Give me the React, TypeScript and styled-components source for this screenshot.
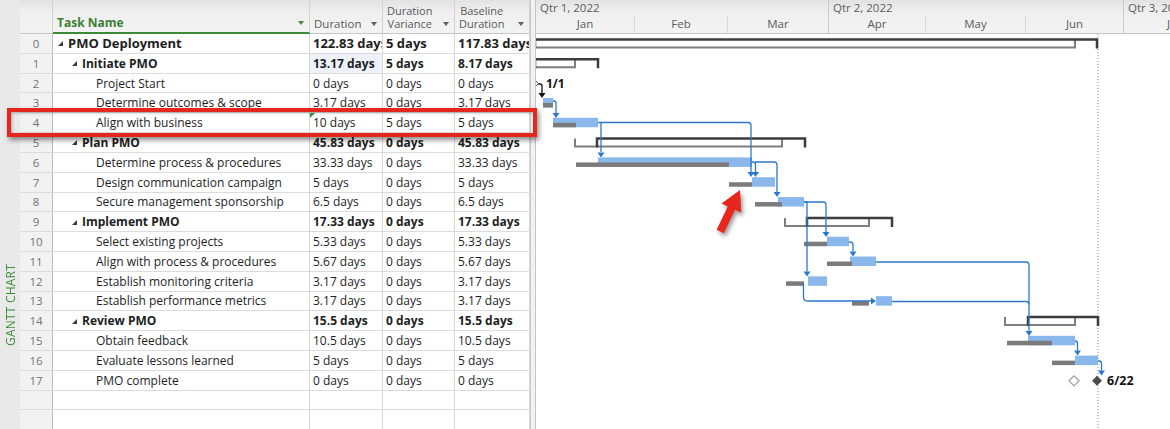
import React from 'react';
import styled, { createGlobalStyle } from 'styled-components';

const GlobalStyle = createGlobalStyle`
	html, body { margin: 0; padding: 0; background: #fff; }
	body { font-family: 'Open Sans', 'Noto Sans', sans-serif; color: #222; }
	* { box-sizing: border-box; }
`;

const COLS = '33px 257px 73px 72px 75px';
const ROW_H = 19.82;
const HEAD_H = 34;

const Screen = styled.div`
	position: relative;
	display: flex;
	width: 1170px;
	height: 429px;
	overflow: hidden;
	background: #fff;
`;

const SideTab = styled.aside`
	flex: 0 0 20px;
	display: flex;
	flex-direction: column;
	justify-content: flex-end;
	align-items: center;
	padding-bottom: 83px;
	background: #e9e9e9;
`;

const SideLabel = styled.span`
	writing-mode: vertical-rl;
	transform: rotate(180deg);
	font-size: 12px;
	letter-spacing: 0.2px;
	color: #3b8c39;
	white-space: nowrap;
`;

const Sheet = styled.section`
	flex: 0 0 510px;
	display: flex;
	flex-direction: column;
`;

const HeadRow = styled.div`
	display: grid;
	grid-template-columns: ${COLS};
	height: ${HEAD_H}px;
	flex: none;
	background: linear-gradient(#e2e2e2, #efefef 35%, #f3f3f3);
`;

const HeadCell = styled.div<{ $accent?: boolean }>`
	display: flex;
	align-items: flex-end;
	justify-content: space-between;
	padding: 0 5px 2px 4px;
	border-right: 1px solid #d2d2d2;
	border-bottom: ${(p) => (p.$accent ? '2px solid #3f8a3a' : '1px solid #c6c6c6')};
	font-size: 11px;
	line-height: 13px;
	color: ${(p) => (p.$accent ? '#3d7f35' : '#5a5a5a')};
	font-weight: ${(p) => (p.$accent ? 700 : 400)};
`;

const HeadLabel = styled.span<{ $size?: number }>`
	text-align: center;
	white-space: nowrap;
	font-size: ${(p) => p.$size ?? 11.5}px;
	padding-bottom: 1px;
`;

const DropArrow = styled.span<{ $color?: string }>`
	flex: none;
	width: 0;
	height: 0;
	margin-bottom: 5px;
	border-left: 3.5px solid transparent;
	border-right: 3.5px solid transparent;
	border-top: 4px solid ${(p) => p.$color || '#5f5f5f'};
`;

const Row = styled.div`
	display: grid;
	grid-template-columns: ${COLS};
	height: ${ROW_H}px;
	flex: none;
`;

const NumCell = styled.div`
	display: flex;
	align-items: center;
	justify-content: center;
	background: #f2f2f2;
	border-right: 1px solid #bdbdbd;
	border-bottom: 1px solid #dcdcdc;
	font-size: 11.5px;
	color: #737373;
`;

const Cell = styled.div<{ $weight: number; $size: number; $tint?: boolean; $flag?: boolean; $indent?: number }>`
	position: relative;
	display: flex;
	align-items: center;
	padding-left: ${(p) => (p.$indent ?? 3)}px;
	border-right: 1px solid #d6d6d6;
	border-bottom: 1px solid #dcdcdc;
	font-size: ${(p) => p.$size}px;
	font-weight: ${(p) => p.$weight};
	color: #1e1e1e;
	white-space: nowrap;
	overflow: hidden;
	background: ${(p) => (p.$tint ? '#edf1f9' : '#fff')};
	&::before {
		content: '';
		display: ${(p) => (p.$flag ? 'block' : 'none')};
		position: absolute;
		left: 0;
		top: 0;
		border-top: 5px solid #2f9a3a;
		border-right: 5px solid transparent;
	}
`;

const Twisty = styled.span`
	flex: none;
	width: 0;
	height: 0;
	margin: 1px 5px 0 0;
	border-left: 5px solid transparent;
	border-bottom: 5px solid #3a3a3a;
`;

const Splitter = styled.div`
	flex: 0 0 6px;
	background: #f1f1f1;
	border-left: 1px solid #c9c9c9;
	border-right: 1px solid #c4c4c4;
`;

const Chart = styled.section`
	flex: 1;
	min-width: 0;
	display: flex;
	flex-direction: column;
`;

const Scale = styled.div`
	flex: none;
	display: flex;
	height: ${HEAD_H}px;
	background: linear-gradient(#e2e2e2, #efefef 35%, #f3f3f3);
	border-bottom: 1px solid #c6c6c6;
`;

const Quarter = styled.div<{ $w: number }>`
	flex: 0 0 ${(p) => p.$w}px;
	display: flex;
	flex-direction: column;
	border-right: 1px solid #cbcbcb;
`;

const QuarterTitle = styled.div`
	height: 16px;
	line-height: 16px;
	padding-left: 4px;
	font-size: 11.5px;
	color: #5c5c5c;
	white-space: nowrap;
`;

const Months = styled.div`
	flex: 1;
	display: flex;
`;

const Month = styled.div<{ $w?: number }>`
	flex: ${(p) => (p.$w ? `0 0 ${p.$w}px` : '1')};
	text-align: center;
	line-height: 16px;
	font-size: 11.5px;
	color: #5c5c5c;
	border-right: 1px solid #d9d9d9;
	&:last-child { border-right: 0; }
`;

const ChartBody = styled.div`
	flex: 1;
	background: #fff;
`;

const Callout = styled.div`
	position: absolute;
	left: 7px;
	top: 108px;
	width: 530px;
	height: 29px;
	border: 4px solid #e4261c;
	box-shadow: 2px 3px 5px rgba(0, 0, 0, 0.45), inset 1px 1px 3px rgba(0, 0, 0, 0.3);
	pointer-events: none;
`;

const Pointer = styled.svg`
	position: absolute;
	left: 700px;
	top: 180px;
	filter: drop-shadow(2px 3px 2px rgba(0, 0, 0, 0.4));
`;

interface Task {
	name: string;
	level: number;
	summary?: boolean;
	duration: string;
	variance: string;
	baseline: string;
}

const tasks: Task[] = [
	{ name: 'PMO Deployment', level: 0, summary: true, duration: '122.83 days', variance: '5 days', baseline: '117.83 days' },
	{ name: 'Initiate PMO', level: 1, summary: true, duration: '13.17 days', variance: '5 days', baseline: '8.17 days' },
	{ name: 'Project Start', level: 2, duration: '0 days', variance: '0 days', baseline: '0 days' },
	{ name: 'Determine outcomes & scope', level: 2, duration: '3.17 days', variance: '0 days', baseline: '3.17 days' },
	{ name: 'Align with business', level: 2, duration: '10 days', variance: '5 days', baseline: '5 days' },
	{ name: 'Plan PMO', level: 1, summary: true, duration: '45.83 days', variance: '0 days', baseline: '45.83 days' },
	{ name: 'Determine process & procedures', level: 2, duration: '33.33 days', variance: '0 days', baseline: '33.33 days' },
	{ name: 'Design communication campaign', level: 2, duration: '5 days', variance: '0 days', baseline: '5 days' },
	{ name: 'Secure management sponsorship', level: 2, duration: '6.5 days', variance: '0 days', baseline: '6.5 days' },
	{ name: 'Implement PMO', level: 1, summary: true, duration: '17.33 days', variance: '0 days', baseline: '17.33 days' },
	{ name: 'Select existing projects', level: 2, duration: '5.33 days', variance: '0 days', baseline: '5.33 days' },
	{ name: 'Align with process & procedures', level: 2, duration: '5.67 days', variance: '0 days', baseline: '5.67 days' },
	{ name: 'Establish monitoring criteria', level: 2, duration: '3.17 days', variance: '0 days', baseline: '3.17 days' },
	{ name: 'Establish performance metrics', level: 2, duration: '3.17 days', variance: '0 days', baseline: '3.17 days' },
	{ name: 'Review PMO', level: 1, summary: true, duration: '15.5 days', variance: '0 days', baseline: '15.5 days' },
	{ name: 'Obtain feedback', level: 2, duration: '10.5 days', variance: '0 days', baseline: '10.5 days' },
	{ name: 'Evaluate lessons learned', level: 2, duration: '5 days', variance: '0 days', baseline: '5 days' },
	{ name: 'PMO complete', level: 2, duration: '0 days', variance: '0 days', baseline: '0 days' },
];

// gantt geometry, in page pixels
type Span = [number, number];
const bars: { row: number; cur: Span; base: Span }[] = [
	{ row: 3, cur: [543, 553], base: [543, 553] },
	{ row: 4, cur: [553, 598], base: [553, 576] },
	{ row: 6, cur: [598, 752], base: [576, 729] },
	{ row: 7, cur: [752, 775], base: [729, 752] },
	{ row: 8, cur: [778, 804], base: [755, 782] },
	{ row: 10, cur: [827, 849], base: [804, 827] },
	{ row: 11, cur: [850, 876], base: [827, 852] },
	{ row: 12, cur: [808, 827], base: [786, 804] },
	{ row: 13, cur: [876, 892], base: [852, 869] },
	{ row: 15, cur: [1028, 1075], base: [1007, 1052] },
	{ row: 16, cur: [1075, 1098], base: [1052, 1075] },
];

const summaries: { row: number; cur: Span; base: Span }[] = [
	{ row: 0, cur: [535, 1097], base: [535, 1075] },
	{ row: 1, cur: [535, 598], base: [535, 575] },
	{ row: 5, cur: [597, 805], base: [575, 782] },
	{ row: 9, cur: [807, 892], base: [785, 869] },
	{ row: 14, cur: [1028, 1098], base: [1005, 1075] },
];

const links: { d: string; tip: [number, number]; dir?: 'right'; color?: string }[] = [
	{ d: 'M538 84 H540 Q542 84 542 86 V93', tip: [542, 98], color: '#111' },
	{ d: 'M553 101 H554 Q556 101 556 103 V113', tip: [556, 118] },
	{ d: 'M598 122.5 H601 V152', tip: [601, 157.5] },
	{ d: 'M601 122.5 H748 Q751 122.5 751 125.5 V172', tip: [751, 177] },
	{ d: 'M752 162 H753 Q755.5 162 755.5 164.5 V172', tip: [755.5, 177] },
	{ d: 'M755 162 H774 Q777 162 777 165 V192', tip: [777, 197] },
	{ d: 'M804 202 H823 Q826 202 826 205 V232', tip: [826, 237] },
	{ d: 'M804 202 H807 V271.5', tip: [807, 276.5] },
	{ d: 'M849 242 H850 Q853 242 853 245 V251.5', tip: [853, 256.5] },
	{ d: 'M803.5 283 V297 Q803.5 301 807.5 301 H871', tip: [876, 301], dir: 'right' },
	{ d: 'M876 262 H1026 Q1029 262 1029 265 V331', tip: [1029, 336] },
	{ d: 'M892 301.5 H1026 Q1029 301.5 1029 304.5', tip: [0, 0] },
	{ d: 'M1075 341 H1075 Q1077.5 341 1077.5 343.5 V350.5', tip: [1077.5, 355.5] },
	{ d: 'M1098 361 H1099 Q1101.5 361 1101.5 363.5 V370.5', tip: [1101.5, 375.5] },
];

const rowTop = (r: number) => HEAD_H + r * ROW_H;
const LINK = '#2c78cf';

function arrowPoints(tip: [number, number], dir?: 'right') {
	const [x, y] = tip;
	if (dir === 'right') return `${x - 5},${y - 3.5} ${x - 5},${y + 3.5} ${x},${y}`;
	return `${x - 3.5},${y - 5} ${x + 3.5},${y - 5} ${x},${y}`;
}

function diamond(cx: number, cy: number, r: number) {
	return `${cx},${cy - r} ${cx + r},${cy} ${cx},${cy + r} ${cx - r},${cy}`;
}

function Gantt() {
	const m17 = rowTop(17) + ROW_H / 2;
	const m2 = rowTop(2) + ROW_H / 2;
	return (
		<svg width={634} height={395} style={{ display: 'block' }}>
			<g transform="translate(-536 -34)">
				<line x1={1098} y1={34} x2={1098} y2={429} stroke="#8d8d8d" strokeDasharray="1 2" />
				{summaries.map((s) => {
					const y1 = rowTop(s.row) + 5.5;
					const y2 = rowTop(s.row) + 13.5;
					return (
						<g key={s.row}>
							<path d={`M${s.base[0]} ${y1} V${y2} H${s.base[1]} V${y1}`} fill="none" stroke="#7e7e7e" strokeWidth={2} />
							<path d={`M${s.cur[0]} ${y2 + 1} V${y1} H${s.cur[1]} V${y2 + 1}`} fill="none" stroke="#3c3c3c" strokeWidth={2.5} />
						</g>
					);
				})}
				{bars.map((b) => (
					<g key={b.row}>
						<rect x={b.cur[0]} y={rowTop(b.row) + 4.5} width={b.cur[1] - b.cur[0]} height={9.5} fill="#8bb8ec" />
						<rect x={b.base[0]} y={rowTop(b.row) + 9.5} width={b.base[1] - b.base[0]} height={4.5} fill="#7b7b7b" />
					</g>
				))}
				{links.map((l, i) => (
					<g key={i}>
						<path d={l.d} fill="none" stroke={l.color || LINK} strokeWidth={1.3} />
						{l.tip[0] > 0 && <polygon points={arrowPoints(l.tip, l.dir)} fill={l.color || LINK} />}
					</g>
				))}
				<polygon points={diamond(534.5, m2, 4)} fill="#fff" stroke="#555" strokeWidth={1} />
				<text x={546} y={m2 + 4} fontSize={12} fontWeight={700} fill="#111">1/1</text>
				<polygon points={diamond(1074, m17, 5)} fill="#fff" stroke="#9a9a9a" strokeWidth={1.2} />
				<polygon points={diamond(1097, m17, 5)} fill="#4d4d4d" />
				<text x={1107} y={m17 + 4.5} fontSize={12.5} fontWeight={700} fill="#111">6/22</text>
			</g>
		</svg>
	);
}

function TaskRow({ task, index }: { task: Task; index: number }) {
	const size = task.level === 0 ? 13 : 12;
	const weight = task.summary ? 700 : 400;
	const indent = task.summary ? 5 + task.level * 14 : 5 + task.level * 14 + 10;
	return (
		<Row>
			<NumCell>{index}</NumCell>
			<Cell $weight={weight} $size={size} $indent={indent}>
				{task.summary && <Twisty />}
				{task.name}
			</Cell>
			<Cell $weight={weight} $size={size} $tint={index === 1} $flag={index === 4}>
				{task.duration}
			</Cell>
			<Cell $weight={weight} $size={size}>{task.variance}</Cell>
			<Cell $weight={weight} $size={size}>{task.baseline}</Cell>
		</Row>
	);
}

function EmptyRow() {
	return (
		<Row>
			<NumCell />
			<Cell $weight={400} $size={12} />
			<Cell $weight={400} $size={12} />
			<Cell $weight={400} $size={12} />
			<Cell $weight={400} $size={12} />
		</Row>
	);
}

export default function App() {
	return (
		<Screen>
			<GlobalStyle />
			<SideTab>
				<SideLabel>GANTT CHART</SideLabel>
			</SideTab>
			<Sheet>
				<HeadRow>
					<HeadCell />
					<HeadCell $accent>
						<HeadLabel $size={12}>Task Name</HeadLabel>
						<DropArrow $color="#3f8a3a" />
					</HeadCell>
					<HeadCell>
						<HeadLabel>Duration</HeadLabel>
						<DropArrow />
					</HeadCell>
					<HeadCell>
						<HeadLabel $size={11}>
							Duration
							<br />
							Variance
						</HeadLabel>
						<DropArrow />
					</HeadCell>
					<HeadCell>
						<HeadLabel $size={11}>
							Baseline
							<br />
							Duration
						</HeadLabel>
						<DropArrow />
					</HeadCell>
				</HeadRow>
				{tasks.map((t, i) => (
					<TaskRow key={i} task={t} index={i} />
				))}
				<EmptyRow />
				<EmptyRow />
			</Sheet>
			<Splitter />
			<Chart>
				<Scale>
					<Quarter $w={293}>
						<QuarterTitle>Qtr 1, 2022</QuarterTitle>
						<Months>
							<Month $w={99}>Jan</Month>
							<Month $w={93}>Feb</Month>
							<Month>Mar</Month>
						</Months>
					</Quarter>
					<Quarter $w={295}>
						<QuarterTitle>Qtr 2, 2022</QuarterTitle>
						<Months>
							<Month $w={97}>Apr</Month>
							<Month $w={100}>May</Month>
							<Month>Jun</Month>
						</Months>
					</Quarter>
					<Quarter $w={300}>
						<QuarterTitle>Qtr 3, 2022</QuarterTitle>
						<Months>
							<Month $w={100}>Jul</Month>
							<Month>Aug</Month>
						</Months>
					</Quarter>
				</Scale>
				<ChartBody>
					<Gantt />
				</ChartBody>
			</Chart>
			<Callout />
			<Pointer width={60} height={65} viewBox="0 0 60 65">
				<polygon points="40,10 41.3,32.8 35,29.8 23.8,53.2 16.6,49.8 27.8,26.4 21.5,23.4" fill="#e8261c" />
			</Pointer>
		</Screen>
	);
}
